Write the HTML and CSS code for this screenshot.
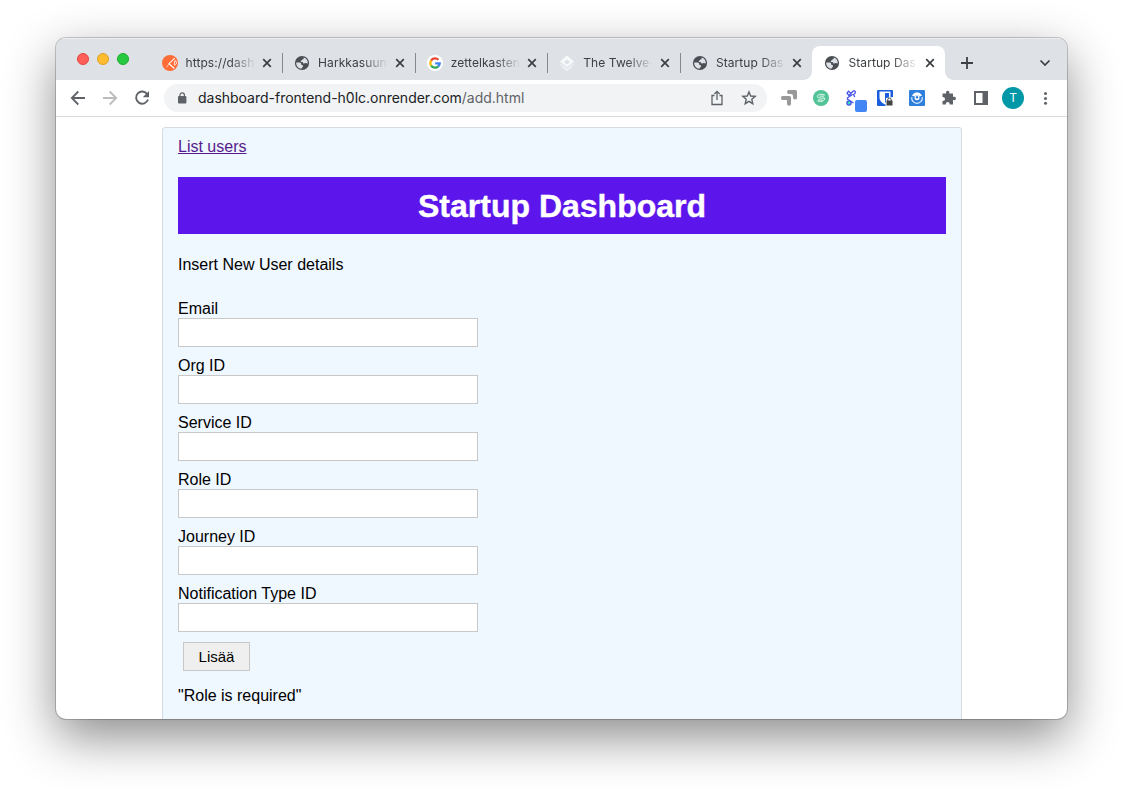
FILE: index.html
```html
<!DOCTYPE html>
<html lang="fi">
<head>
<meta charset="utf-8">
<title>Startup Dashboard</title>
<link rel="stylesheet" href="styles.css">
</head>
<body>
<svg class="defs" width="0" height="0">
  <symbol id="globe" viewBox="0 0 16 16"><circle cx="8" cy="8" r="7.1" fill="#4b4f54"/><path d="M9.600 2.600C10 3.600 9.600 4.300 8.600 4.500C7.600 4.700 7.800 5.600 7 5.900C6.500 6.200 6.800 7 7.600 7C9 7 9.300 7.600 9.400 8.600C10.200 9 10.600 8.200 11.500 8.100C12.500 8 13.200 8.600 13.700 8.700C14 6 12.600 3.300 9.600 2.600Z" fill="#dee1e6" class="land"/><path d="M2.200 7.400H5.500C7.200 7.500 7.600 8.800 7.300 10C8.800 10 9.300 10.600 9 11.500C8.700 12.300 7.800 12.500 7.400 13.700C4.300 13.500 2 10.700 2.200 7.400Z" fill="#dee1e6" class="land"/></symbol>
  <symbol id="close" viewBox="0 0 10 10"><path d="M1.200 1.200L8.800 8.800M8.800 1.200L1.200 8.800" stroke="#3c4043" stroke-width="1.700"/></symbol>
</svg>
<div class="window">
  <div class="tabstrip">
    <div class="lights"><i class="light red"></i><i class="light yellow"></i><i class="light green"></i></div>
    <div class="tabs">
      <div class="tab first">
        <svg class="favicon" viewBox="0 0 16 16"><circle cx="8" cy="8" r="8" fill="#ff6c37"/><path d="M12.800 3.200L7 8.700L12.300 13.500" stroke="#fff" stroke-width="1.100" fill="none"/><path d="M7 8.700L4.500 12.500" stroke="#ffd2c0" stroke-width=".8"/><path d="M13.200 5.500C15.200 7 14.800 9 12.600 10.300C12 9 12.500 7.500 13.200 5.500Z" fill="none" stroke="#fff" stroke-width=".9"/></svg>
        <span class="title">https://dash</span><svg class="close"><use href="#close"/></svg>
      </div>
      <div class="tab"><svg class="favicon"><use href="#globe"/></svg><span class="title">Harkkasuunn</span><svg class="close"><use href="#close"/></svg></div>
      <div class="tab">
        <svg class="favicon" viewBox="0 0 16 16"><circle cx="8" cy="8" r="8" fill="#fff"/><g fill="none" stroke-width="2.300"><path d="M4.100 5.600A4.700 4.700 0 0 1 11.400 4.700" stroke="#ea4335"/><path d="M4.100 5.600A4.700 4.700 0 0 0 4.100 10.600" stroke="#fbbc05"/><path d="M4.100 10.600A4.700 4.700 0 0 0 11.200 11.400" stroke="#34a853"/><path d="M11.200 11.400A4.700 4.700 0 0 0 12.700 8.300H8.200" stroke="#4285f4"/></g></svg>
        <span class="title">zettelkasten</span><svg class="close"><use href="#close"/></svg>
      </div>
      <div class="tab">
        <svg class="favicon" viewBox="0 0 16 16"><path fill="#f8f9fa" fill-rule="evenodd" d="M8 .4L15 6.400L8 12.200L1 6.400ZM8 4.600L5 7L8 9.500L11 7Z"/><path d="M.7 8.500L8 14.200L15.300 8.500M3 11.800L8 15.600L13 11.800" fill="none" stroke="#f8f9fa" stroke-width=".9"/></svg>
        <span class="title">The Twelve-</span><svg class="close"><use href="#close"/></svg>
      </div>
      <div class="tab"><svg class="favicon"><use href="#globe"/></svg><span class="title">Startup Das</span><svg class="close"><use href="#close"/></svg></div>
      <div class="tab active"><svg class="favicon"><use href="#globe"/></svg><span class="title">Startup Das</span><svg class="close"><use href="#close"/></svg></div>
    </div>
    <svg class="newtab" viewBox="0 0 12 12"><path d="M6 0V12M0 6H12" stroke="#3c4043" stroke-width="1.800"/></svg>
    <svg class="chevron" viewBox="0 0 12 8"><path d="M1.500 1.500L6 6L10.500 1.500" fill="none" stroke="#3c4043" stroke-width="1.700"/></svg>
  </div>
  <div class="toolbar">
    <div class="nav">
      <svg viewBox="0 0 16 16"><path d="M15 8H2M8.300 1.500L1.800 8L8.300 14.500" fill="none" stroke="#5f6368" stroke-width="1.800"/></svg>
      <svg viewBox="0 0 16 16"><path d="M1 8H14M7.700 1.500L14.200 8L7.700 14.500" fill="none" stroke="#babcbe" stroke-width="1.800"/></svg>
      <svg viewBox="0 0 16 16"><path d="M13.300 4.300A6.100 6.100 0 1 0 14 9.500" fill="none" stroke="#5f6368" stroke-width="1.900"/><path d="M15 1V7.200H8.800Z" fill="#5f6368"/></svg>
    </div>
    <div class="omnibox">
      <svg class="lock" viewBox="0 0 10 12"><rect x="1" y="4" width="8.400" height="7.600" rx="1" fill="#5f6368"/><path d="M3 4.500V3A2.200 2.200 0 0 1 7.400 3V4.500" fill="none" stroke="#5f6368" stroke-width="1.200"/></svg>
      <span class="url">dashboard-frontend-h0lc.onrender.com<span class="path">/add.html</span></span>
      <svg class="share" viewBox="0 0 16 16"><path d="M5.500 5.500H3V14.500H13V5.500H10.500M8 10V1.500M5.400 4L8 1.400L10.600 4" fill="none" stroke="#5f6368" stroke-width="1.300"/></svg>
      <svg class="star" viewBox="0 0 16 16"><path d="M8 1.900L9.700 6L14.200 6.400L10.800 9.300L11.800 13.700L8 11.400L4.200 13.700L5.200 9.300L1.800 6.400L6.300 6Z" fill="none" stroke="#5f6368" stroke-width="1.400"/></svg>
    </div>
    <div class="extensions">
      <svg viewBox="0 0 16 16"><path d="M7 0H14.500Q16 0 16 1.500V8Q16 9.500 14 9.500Q12 9.500 12 7.500V6Q12 4 10 4H8Q6 4 6 2ZM1.500 6H8.500Q10 6 10 7.500V14Q10 15.800 8 15.800Q6 15.800 6 14V10H1.500Q0 10 0 8Q0 6 1.500 6Z" fill="#999"/></svg>
      <svg viewBox="0 0 16 16"><circle cx="8" cy="8" r="8" fill="#52c297"/><path d="M12 5.300C10.500 3.800 4.800 3.600 4.300 6.200C4.100 8.200 7 8 11.700 8.100C12.200 11 6.500 12.800 4.300 10.700M6.500 6.100H11M5 10H9.500" fill="none" stroke="#e8faf2" stroke-width="1"/></svg>
      <span class="badged"><svg viewBox="0 0 16 16"><path d="M5.500 3L3.500 1.200L2 3.200L4 5.500L8 1.300Q9.800 0 10.300 1.800Q10.600 3.800 8.500 4.500L9.800 7M7.500 4.500L3 7.500Q1.500 9 3.500 9.800L8.500 13" fill="none" stroke="#4752e6" stroke-width="1.300"/><circle cx="4" cy="13" r="2.100" fill="#31e0b4" stroke="#4752e6" stroke-width="1.300"/></svg><i class="badge"></i></span>
      <svg viewBox="0 0 16 16"><rect width="16" height="16" rx="1" fill="#175ddc"/><path d="M2.500 1.500H13.500V8C13.500 11.500 10 13.500 8 14.600C5 13 2.500 11 2.500 8Z" fill="#fff"/><path d="M8 3H12V8C12 10.500 10 12 8 12.900Z" fill="#175ddc"/><path d="M9 8L16 7V16H8.500Z" fill="#fff"/><rect x="9.500" y="10.500" width="6" height="5" fill="#444"/><path d="M10.700 11V9.800A1.700 1.700 0 0 1 14.200 9.800V11" fill="none" stroke="#444" stroke-width="1"/></svg>
      <svg viewBox="0 0 16 16"><rect width="16" height="16" rx="1" fill="#2f80dc"/><path d="M2.800 7A5.300 5.300 0 1 0 13.200 7" fill="none" stroke="#d7eaff" stroke-width="1.200"/><path d="M2.800 5.500Q8 -.8 13.200 5.500L10.500 6.500Q8 3.800 5.500 6.500Z" fill="#fff"/><circle cx="8" cy="7.800" r="2.500" fill="#fff"/><circle cx="8" cy="7.300" r="1.200" fill="#2f80dc"/></svg>
      <svg viewBox="0 0 16 16"><path d="M1.500 3.500H5.200C4.700 1.700 5.400 .8 6.700 .8C8 .8 8.700 1.700 8.300 3.500H12V7C13.900 6.500 14.900 7.200 14.900 8.500C14.900 9.800 13.900 10.500 12 10V14.500H8.700C8.700 12.700 8 11.900 6.800 11.900C5.500 11.900 4.800 12.700 4.800 14.500H1.500V11C3.200 11 4 10.200 4 9C4 7.800 3.200 7 1.500 7Z" fill="#5f6368"/></svg>
      <svg viewBox="0 0 16 16"><path d="M1 1H15V15H1ZM3 3V13H9.500V3Z" fill="#5f6368" fill-rule="evenodd"/></svg>
      <span class="avatar">T</span>
      <svg viewBox="0 0 16 16" fill="#5f6368"><circle cx="8.500" cy="3.400" r="1.500"/><circle cx="8.500" cy="8.400" r="1.500"/><circle cx="8.500" cy="13.200" r="1.500"/></svg>
    </div>
  </div>
  <div class="viewport">
    <main class="container">
      <a class="link" href="#">List users</a>
      <h1 class="heading">Startup Dashboard</h1>
      <p class="intro">Insert New User details</p>
      <form class="form">
        <label class="field">Email<input class="input" type="text"></label>
        <label class="field">Org ID<input class="input" type="text"></label>
        <label class="field">Service ID<input class="input" type="text"></label>
        <label class="field">Role ID<input class="input" type="text"></label>
        <label class="field">Journey ID<input class="input" type="text"></label>
        <label class="field">Notification Type ID<input class="input" type="text"></label>
        <button class="submit" type="button">Lisää</button>
      </form>
      <p class="message">"Role is required"</p>
    </main>
  </div>
</div>
</body>
</html>
```
FILE: styles.css
```css
* { box-sizing: border-box; }
body { margin: 0; height: 793px; padding: 38px 56px 74px; background: #fff; overflow: hidden; font-family: "Liberation Sans", Arial, sans-serif; }
svg { display: block; flex: none; }
.defs { position: absolute; }
.window { width: 1011px; height: 681px; border-radius: 10px; background: #fff; overflow: hidden; display: flex; flex-direction: column; box-shadow: 0 0 0 1px rgba(0,0,0,.2), 0 18px 50px rgba(0,0,0,.46); }

.tabstrip { height: 42px; flex: none; background: #dee1e6; display: flex; box-shadow: inset 0 1px #eceef1; }
.lights { width: 93.5px; flex: none; padding: 15px 0 0 21px; display: flex; gap: 8px; }
.light { width: 12px; height: 12px; border-radius: 50%; border: 1px solid; }
.red { background: #ff5f57; border-color: #e2463f; }
.yellow { background: #febc2e; border-color: #e0a028; }
.green { background: #28c840; border-color: #1dad2b; }
.tabs { display: flex; padding-top: 8px; }
.tab { width: 132.6px; height: 34px; display: flex; align-items: center; padding-left: 12px; position: relative; }
.tab::before { content: ""; position: absolute; left: .2px; top: 7px; width: 1px; height: 20px; background: #85898e; }
.tab.first::before { display: none; }
.favicon { width: 16px; height: 16px; }
.title { width: 70px; margin: 0 8px; white-space: nowrap; font: 12px/16px Inter, sans-serif; letter-spacing: .08px; color: #3c4043; -webkit-mask-image: linear-gradient(90deg, #000 44px, transparent 70px); mask-image: linear-gradient(90deg, #000 44px, transparent 70px); }
.close { width: 10px; height: 10px; margin-left: -1.5px; }
.active { background: #fff; border-radius: 8px 8px 0 0; }
.active .land { fill: #fff; }
.active::before, .active::after { content: ""; display: block; position: absolute; top: auto; bottom: 0; width: 8px; height: 8px; }
.active::before { left: -8px; background: radial-gradient(circle at 0 0, transparent 7.5px, #fff 8px); }
.active::after { right: -8px; background: radial-gradient(circle at 100% 0, transparent 7.5px, #fff 8px); }
.newtab { width: 12px; height: 12px; margin: 19px 0 0 16px; }
.chevron { width: 12px; height: 8px; margin: 21px 16px 0 auto; }

.toolbar { height: 37px; flex: none; display: flex; align-items: center; border-bottom: 1px solid #dadce0; padding-left: 14px; }
.nav { display: flex; gap: 16px; }
.nav svg, .extensions svg { width: 16px; height: 16px; }
.omnibox { width: 603px; height: 28px; margin-left: 14px; border-radius: 14px; background: #f1f3f4; display: flex; align-items: center; padding: 0 10px 0 13px; }
.lock { width: 10px; height: 12px; }
.url { margin-left: 11px; flex: 1; font: 14px/20px Inter, sans-serif; letter-spacing: -.015px; color: #202124; white-space: nowrap; }
.path { color: #5f6368; }
.share, .star { width: 16px; height: 16px; }
.star { margin-left: 16px; }
.extensions { display: flex; align-items: center; gap: 16px; margin-left: 14px; }
.badged { position: relative; }
.badge { position: absolute; left: 10px; top: 10px; width: 12px; height: 12px; border-radius: 2px; background: #4285f4; }
.avatar { width: 22px; height: 22px; margin: 0 -3px; border-radius: 50%; background: #0097a7; color: #fff; font: 12px/22px Inter, sans-serif; text-align: center; }

.viewport { flex: 1; overflow: hidden; padding: 10px 105px 0 106px; }
.container { width: 800px; height: 700px; border: 1px solid #d5dbe0; border-radius: 3px; background: #eff7ff; padding: 10px 15px; font-size: 16px; line-height: 18px; color: #000; }
.link { display: block; width: max-content; color: #551a8b; }
.heading { margin: 21px 0 22px; height: 57px; background: #5c16eb; color: #fff; font-size: 32px; line-height: 58px; text-align: center; -webkit-text-stroke: .4px #fff; }
.intro { margin: 0 0 26px; }
.field { display: block; height: 57px; }
.input { display: block; width: 300px; height: 29px; padding: 5px; border: 1px solid #c8c8c8; background: #fff; }
.submit { display: block; width: 67px; height: 29px; margin: 0 0 16px 5px; padding: 0; border: 1px solid #c8c8c8; background: #efefef; font: 15px "Liberation Sans", Arial, sans-serif; color: #000; }
.message { margin: 0; }
```
